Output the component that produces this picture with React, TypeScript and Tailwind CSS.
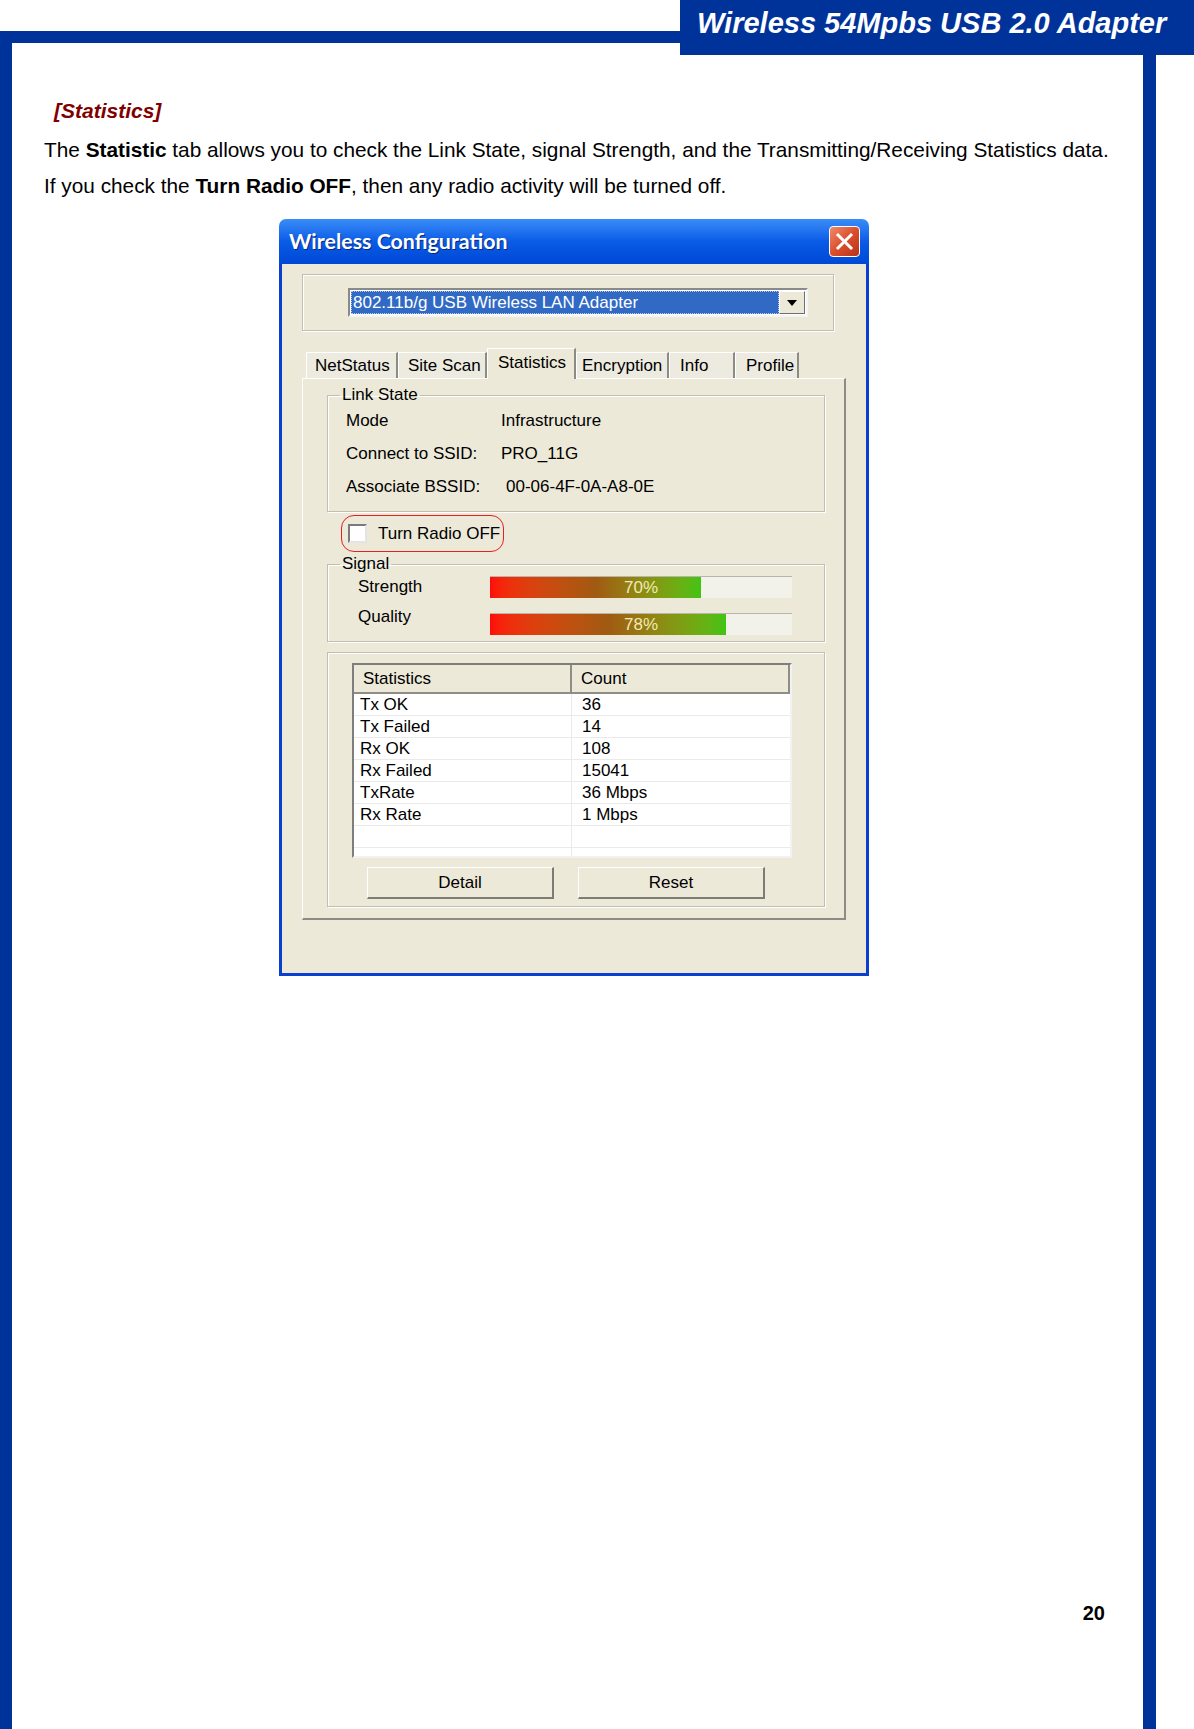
import React from "react";

const tabs = [
  { label: "NetStatus", w: "w-[92px]", pl: "pl-[8px]" },
  { label: "Site Scan", w: "w-[89px]", pl: "pl-[9px]" },
  { label: "Statistics", w: "w-[89px]", pl: "pl-[10px]", active: true },
  { label: "Encryption", w: "w-[93px]", pl: "pl-[5px]" },
  { label: "Info", w: "w-[66px]", pl: "pl-[10px]" },
  { label: "Profile", w: "w-[64px]", pl: "pl-[10px]" },
];

const stats = [
  ["Tx OK", "36"],
  ["Tx Failed", "14"],
  ["Rx OK", "108"],
  ["Rx Failed", "15041"],
  ["TxRate", "36 Mbps"],
  ["Rx Rate", "1 Mbps"],
  ["", ""],
];

function SignalBar({ pct }: { pct: number }) {
  return (
    <div className="relative w-[302px] h-[22px] bg-[#F3F2EA] border-t border-[#B8B6A8]">
      <div
        className="h-full bg-gradient-to-r from-[#FF0A0A] via-[#A05A12] to-[#3FC414]"
        style={{ width: `${pct}%` }}
      />
      <span className="absolute inset-0 flex items-center justify-center text-[#F3E9B4] text-[17px]">{pct}%</span>
    </div>
  );
}

function Dialog() {
  return (
    <div className="ml-[267px] mt-[15px] w-[590px] flex flex-col text-[17px] text-black">
      {/* title bar */}
      <div className="h-[45px] rounded-t-[7px] bg-gradient-to-b from-[#3A8CF8] via-[#0A5BE6] to-[#0048D6] flex items-center justify-between pl-[10px] pr-[9px]">
        <span className="text-white font-bold text-[21.4px] font-['Lato',sans-serif] [text-shadow:1px_1px_0_#0A2A80]">
          Wireless Configuration
        </span>
        <div className="w-[31px] h-[31px] rounded-[4px] border border-white bg-gradient-to-br from-[#EE8A6A] via-[#DA4E2C] to-[#B8321A] flex items-center justify-center">
          <svg width="19" height="19" viewBox="0 0 19 19">
            <path d="M3 3 L16 16 M16 3 L3 16" stroke="white" strokeWidth="3" strokeLinecap="square" />
          </svg>
        </div>
      </div>
      {/* body */}
      <div className="bg-[#ECE9D8] border-x-[3px] border-b-[3px] border-[#0B3FCF] flex flex-col">
        {/* adapter group */}
        <div className="ml-[20px] mt-[10px] w-[532px] h-[57px] border border-[#C2BFB0] shadow-[inset_1px_1px_0_#fff,1px_1px_0_#fff] pl-[45px] pt-[13px]">
          <div className="w-[460px] h-[29px] flex border-2 border-l-[#8A8A8A] border-t-[#8A8A8A] border-r-[#F4F4F4] border-b-[#F4F4F4] bg-white p-[1px]">
            <div className="flex-1 bg-[#316AC5] outline-1 outline-dotted outline-[#B8C6E8] -outline-offset-1 flex items-center pl-[2px] text-white leading-none">
              802.11b/g USB Wireless LAN Adapter
            </div>
            <div className="w-[26px] bg-[#ECE9D8] border border-l-white border-t-white border-r-[#6E6E6E] border-b-[#6E6E6E] flex items-center justify-center">
              <svg width="10" height="6" viewBox="0 0 10 6">
                <path d="M0 0 H10 L5 6 Z" fill="black" />
              </svg>
            </div>
          </div>
        </div>

        {/* tabs */}
        <div className="ml-[20px] mt-[17px] h-[31px] flex items-end pl-[4px] -mb-px relative z-10">
          {tabs.map((t) =>
            t.active ? (
              <div
                key={t.label}
                className={`${t.w} ${t.pl} h-[31px] bg-[#ECE9D8] border-t border-l border-white border-r-2 border-r-[#8C8C84] flex items-start pt-[3px] leading-[22px]`}
              >
                {t.label}
              </div>
            ) : (
              <div
                key={t.label}
                className={`${t.w} ${t.pl} h-[26px] bg-[#EDEBE0] border-t border-l border-white border-r-2 border-r-[#8C8C84] flex items-center mb-px`}
              >
                {t.label}
              </div>
            )
          )}
        </div>

        {/* tab panel */}
        <div className="ml-[20px] w-[544px] h-[542px] border-l border-t border-white border-r-2 border-b-2 border-r-[#8C8C84] border-b-[#8C8C84] px-[24px] pt-[7px] flex flex-col">
          <fieldset className="w-[498px] border border-[#C2BFB0] shadow-[inset_1px_1px_0_#fff,1px_1px_0_#fff] pb-[8px]">
            <legend className="ml-[12px] px-[2px] leading-[18px]">Link State</legend>
            {[
              ["Mode", "Infrastructure", ""],
              ["Connect to SSID:", "PRO_11G", ""],
              ["Associate BSSID:", "00-06-4F-0A-A8-0E", "pl-[5px]"],
            ].map(([k, v, extra]) => (
              <div key={k} className="h-[33px] flex items-center pl-[18px]">
                <span className="w-[155px]">{k}</span>
                <span className={extra}>{v}</span>
              </div>
            ))}
          </fieldset>

          <div className="ml-[14px] mt-[3px] w-[163px] h-[37px] border-[1.5px] border-[#E42020] rounded-[13px] flex items-center pl-[6px]">
            <div className="w-[19px] h-[19px] border-2 border-l-[#7A7A7A] border-t-[#7A7A7A] border-r-[#E4E4E4] border-b-[#E4E4E4] bg-white" />
            <span className="ml-[11px]">Turn Radio OFF</span>
          </div>

          <fieldset className="mt-[3px] w-[498px] border border-[#C2BFB0] shadow-[inset_1px_1px_0_#fff,1px_1px_0_#fff] pb-[6px]">
            <legend className="ml-[12px] px-[2px] leading-[18px]">Signal</legend>
            <div className="mt-[3px] h-[22px] flex items-center pl-[30px]">
              <span className="w-[132px]">Strength</span>
              <SignalBar pct={70} />
            </div>
            <div className="mt-[15px] h-[22px] flex items-center pl-[30px]">
              <span className="w-[132px] -mt-[14px]">Quality</span>
              <SignalBar pct={78} />
            </div>
          </fieldset>

          <div className="mt-[10px] w-[498px] border border-[#C2BFB0] shadow-[inset_1px_1px_0_#fff,1px_1px_0_#fff] pt-[10px] pb-[7px] flex flex-col">
            {/* list view */}
            <div className="ml-[24px] w-[440px] h-[195px] border-2 border-l-[#7E7E7E] border-t-[#7E7E7E] border-r-[#F2F2F2] border-b-[#F2F2F2] bg-white overflow-hidden">
              <div className="h-[29px] flex bg-[#ECE9D8] border-b-2 border-[#8E8E86]">
                <div className="w-[218px] border-r-2 border-[#8E8E86] flex items-center pl-[9px]">Statistics</div>
                <div className="flex-1 flex items-center pl-[9px] border-r-2 border-[#8E8E86]">Count</div>
              </div>
              {stats.map(([k, v], i) => (
                <div key={i} className="h-[22px] flex border-b border-[#EAEAEA] leading-none">
                  <div className="w-[218px] border-r border-[#EAEAEA] flex items-center pl-[6px]">{k}</div>
                  <div className="flex-1 flex items-center pl-[10px]">{v}</div>
                </div>
              ))}
              <div className="h-[22px] flex">
                <div className="w-[218px] border-r border-[#EAEAEA]" />
              </div>
            </div>
            <div className="mt-[9px] ml-[39px] flex gap-[24px]">
              {["Detail", "Reset"].map((b) => (
                <div
                  key={b}
                  className="w-[187px] h-[32px] bg-[#ECE9D8] border border-l-white border-t-white border-r-2 border-b-2 border-r-[#7C7C74] border-b-[#7C7C74] flex items-center justify-center"
                >
                  {b}
                </div>
              ))}
            </div>
          </div>
        </div>
        <div className="h-[53px]" />
      </div>
    </div>
  );
}

export default function App() {
  return (
    <div className="w-[1194px] h-[1729px] bg-white overflow-hidden font-['Liberation_Sans',Arial,sans-serif]">
      {/* header */}
      <div className="flex h-[55px]">
        <div className="w-[680px] pt-[31px]">
          <div className="h-[24px] border-t-[12px] border-l-[12px] border-[#003399]" />
        </div>
        <div className="w-[514px] h-[55px] bg-[#003399] pl-[17px] pt-[6px]">
          <span className="text-white font-bold italic text-[29px] leading-[34px] whitespace-nowrap">
            Wireless 54Mpbs USB 2.0 Adapter
          </span>
        </div>
      </div>
      {/* page body */}
      <div className="flex h-[1674px]">
        <div className="w-[12px] bg-[#003399]" />
        <div className="w-[1131px] flex flex-col">
          <div className="pl-[42px] mt-[44px] text-[#800000] font-bold italic text-[21px] leading-[24px]">
            [Statistics]
          </div>
          <div className="pl-[32px] mt-[9px] text-black text-[20.8px] leading-[36px]">
            <p className="whitespace-nowrap">
              The <b>Statistic</b> tab allows you to check the Link State, signal Strength, and the
              Transmitting/Receiving Statistics data.
            </p>
            <p>
              If you check the <b>Turn Radio OFF</b>, then any radio activity will be turned off.
            </p>
          </div>
          <Dialog />
          <div className="mt-[625px] pr-[38px] text-right font-bold text-[20px] leading-[24px]">20</div>
        </div>
        <div className="w-[13px] bg-[#003399]" />
        <div className="flex-1" />
      </div>
    </div>
  );
}
